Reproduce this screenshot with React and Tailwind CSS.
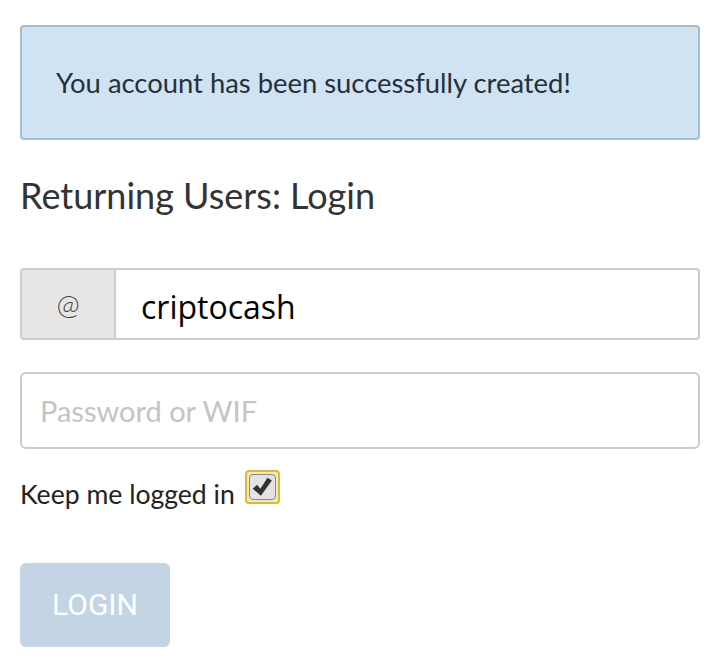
import React from 'react';

const App = () => {
  return (
    <div className="w-[720px] h-[660px] bg-white px-5 pt-[25px] font-['Lato',sans-serif] text-[#333]">
      {/* Сообщение об успехе */}
      <div className="h-[115px] rounded border-2 border-[#a9bccb] bg-[#d0e3f2] flex items-center px-[34px]">
        <span className="text-[27.4px] text-[#25303a]">You account has been successfully created!</span>
      </div>

      {/* Заголовок */}
      <h3 className="mt-[34px] text-[36px] leading-[42px] text-[#333]">Returning Users: Login</h3>

      {/* Имя пользователя */}
      <div className="mt-[52px] flex h-[72px] rounded border-2 border-[#cccccc] overflow-hidden">
        <div className="w-[94px] bg-[#e6e6e6] border-r-2 border-[#cccccc] flex items-center justify-center text-[28px] font-light text-[#444]">
          @
        </div>
        <div className="flex-1 flex items-center pl-[25px] pt-[6px] font-['Open_Sans',sans-serif] text-[32px] text-black">
          criptocash
        </div>
      </div>

      {/* Пароль */}
      <div className="mt-[32px] h-[77px] rounded-md border-2 border-[#cccccc] flex items-center pl-[18px]">
        <span className="text-[29px] text-[#c4c4c4]">Password or WIF</span>
      </div>

      {/* Запомнить */}
      <div className="mt-[21px] flex items-start">
        <span className="mt-[5px] text-[26.6px] text-[#222]">Keep me logged in</span>
        <div className="ml-[10px] w-[35px] h-[34px] rounded-sm border-2 border-[#dbbb35] bg-[#f4e9b8] p-[2px]">
          <div className="w-full h-full rounded-sm border border-[#8a8a8a] bg-[#e3e3e3] flex items-center justify-center">
            <svg width="22" height="22" viewBox="0 0 20 20">
              <path d="M1.5 11.5 L5.5 8 L8.5 11.5 L15 1.5 L19 4 L9 18 Z" fill="#333" />
            </svg>
          </div>
        </div>
      </div>

      {/* Кнопка */}
      <button className="mt-[48px] w-[150px] h-[84px] rounded-md bg-[#c3d4e4] text-white text-[30px] font-['Roboto',sans-serif] flex items-center justify-center">
        LOGIN
      </button>
    </div>
  );
};

export default App;
